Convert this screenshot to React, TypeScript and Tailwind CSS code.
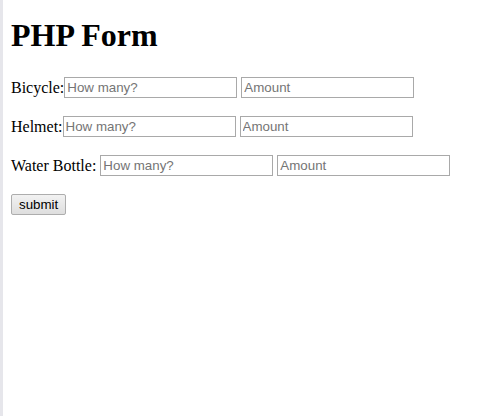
import React from "react";

const inputCls =
  "w-[173px] h-[21px] border border-[#a9a9a9] px-[2px] py-[1px] font-['Liberation_Sans',Arial,sans-serif] text-[13.33px] text-black placeholder:text-[#757575] bg-white outline-none";

function Row({ label, space }: { label: string; space?: boolean }) {
  return (
    <p className="my-[16px] h-[23px] flex items-center">
      <span className={space ? "mr-[4px]" : ""}>{label}</span>
      <input className={inputCls} placeholder="How many?" />
      <input className={`${inputCls} ml-[4px]`} placeholder="Amount" />
    </p>
  );
}

export default function App() {
  return (
    <div className="flex min-h-[416px] bg-white font-['Liberation_Serif','Times_New_Roman',serif]">
      <div className="w-[3px] shrink-0 bg-[#e6e6eb]" />
      <div className="flex-1 px-[8px] pb-[8px] text-[16px] text-black">
        <h1 className="text-[32px] font-bold leading-[37px] mt-[17px] mb-[22px]">PHP Form</h1>
        <form>
          <Row label="Bicycle:" />
          <Row label="Helmet:" />
          <Row label="Water Bottle:" space />
          <button
            type="button"
            className="block mt-[17px] h-[21px] px-[7px] border border-[#adadad] rounded-[2px] bg-gradient-to-b from-[#f2f2f2] to-[#dedede] font-['Liberation_Sans',Arial,sans-serif] text-[13.33px] text-black leading-[17px]"
          >
            submit
          </button>
        </form>
      </div>
    </div>
  );
}
